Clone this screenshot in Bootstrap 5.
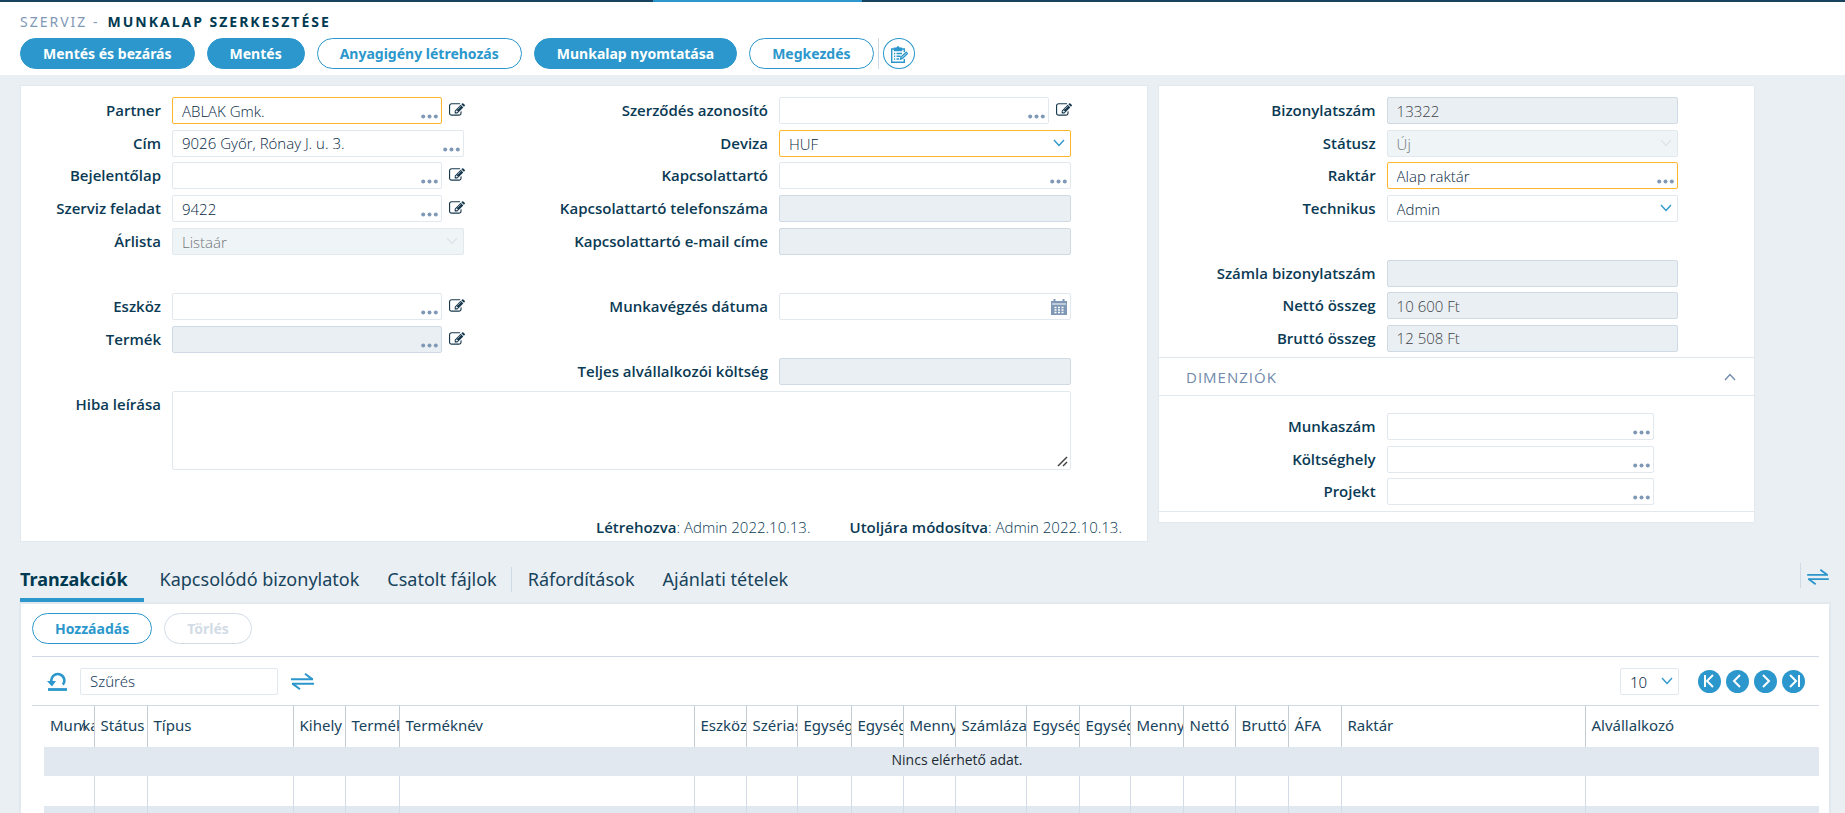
<!DOCTYPE html>
<html lang="hu">
<head>
<meta charset="utf-8">
<meta name="viewport" content="width=device-width, initial-scale=1">
<title>Munkalap szerkesztése</title>
<link href="https://cdn.jsdelivr.net/npm/bootstrap@5.3.0/dist/css/bootstrap.min.css" rel="stylesheet">
<style>
:root{--ink:#0b3a54;--blue:#2b97cc;--bg:#eaeff3;--line:#e1e8ee;--soft:#7f98b6;--warn:#fdb52a}
body{background:var(--bg);color:var(--ink);font:15px/20px "Open Sans","Noto Sans",sans-serif}
.ui-font{font-family:"Noto Sans","Open Sans",sans-serif}
.topline{height:2px;background:linear-gradient(90deg,#17435c 35.4%,var(--blue) 35.4% 46.7%,#17435c 46.7%)}
.head{height:73px;padding:10px 20px 0}
.crumbs{font-size:14px;letter-spacing:2px;color:var(--soft);gap:8px;height:20px;margin-bottom:6px}
.crumbs h1{font-size:14px;line-height:20px;font-weight:700;color:#003a51;margin:0}
.btn-row{display:flex;gap:12px}
.pill{height:31px;padding:0 22px;border:1px solid var(--blue);border-radius:16px;background:#fff;color:var(--blue);font:700 14px/20px "Noto Sans",sans-serif;white-space:nowrap}
.pill.full{background:var(--blue);color:#fff}
.pill:disabled{border-color:#d3dce6;color:#d3dce6}
.round-btn{width:32px;height:31px;border:1px solid var(--blue);border-radius:50%;background:#fff;color:var(--blue);padding:0}
.rule-v{width:1px;background:#cfdae4}
.panels{display:grid;grid-template-columns:1128fr 597fr;gap:10px;padding:10px 90px 0 20px;align-items:start}
.panel{background:#fff;border:1px solid var(--line)}
.fields{display:grid;grid-auto-rows:1fr}
.fields.main{grid-template-columns:151fr 292fr 315fr 292fr 76fr;grid-template-rows:repeat(9,1fr) auto;min-height:373px;margin-top:11px}
.fields.side{grid-template-columns:228fr 292fr 76fr;grid-template-rows:repeat(8,1fr);min-height:260px;margin-top:11px}
.fields.dims{grid-template-columns:228fr 268fr 100fr;grid-template-rows:repeat(3,1fr);min-height:98px}
.fields label{grid-column:1;text-align:right;padding-right:11px;font-weight:600;line-height:27px;white-space:nowrap}
.fields .fld{grid-column:2}
.fields label.c2{grid-column:3}
.fields .fld.c2{grid-column:4}
.fld{display:flex;position:relative;height:27px;min-width:0}
.box{flex:1;min-width:0;width:100%;height:27px;border:1px solid var(--line);border-radius:2px;background:#fff;color:#06283f;padding:0 9px;font-size:15px;font-weight:300;line-height:20px;outline:0;appearance:none}
.box:read-only:not(select){border-color:#cfdae4;background:var(--bg);color:#3d4347}
select.box{padding-top:2px}
select.box:disabled{background:#eff4f7;color:#707578;opacity:1}
.box.need,.box.need:read-only{border-color:var(--warn)}
.holder{position:relative;flex:1;display:flex;min-width:0}
.dots,.mark-r{position:absolute;right:4px;bottom:5px;border:0;background:none;padding:0;line-height:0;color:var(--soft)}
.mark-r{right:6px;top:0;bottom:0;display:flex;align-items:center;color:var(--blue);pointer-events:none}
.mark-r.off{color:#dde4ea}
.mark-r.cal{color:var(--soft);right:4px}
.edit{width:22px;border:0;background:none;padding:0 0 1px 7px;line-height:0;color:#17384d}
.fields .area{grid-column:2/5;height:auto}
textarea.box{height:79px;resize:none}
.grip{position:absolute;right:3px;bottom:3px}
.meta{padding:47px 25px 4px;gap:39px;line-height:20px;font-weight:300}
.meta b{font-weight:600}
.dim-head{border:solid var(--line);border-width:1px 0;height:39px;padding:0 18px 0 27px;margin-bottom:17px;background:#fff;color:#6f8aab;font-size:15px;font-weight:400;letter-spacing:1px}
.dim-foot{border-top:1px solid var(--line);height:11px}
.tabbar{margin:19px 16px 0 20px;height:41px;font-size:18px}
.tabbar a{color:#17435c;text-decoration:none;padding:6px 0 0;line-height:24px;margin-right:28px;white-space:nowrap}
.tabbar a.on{font-weight:700;color:#003a51;border-bottom:4px solid var(--blue);padding-right:16px;margin-right:16px}
.tabbar .rule-v{height:25px;margin:6px 16px 0 -14px}
.tabbar .rule-end{margin:2px 6px 0 auto}
.lower{margin:0 14px 0 19px;border:2px solid var(--line);background:#fff;padding:9px 10px 0 11px;min-height:240px}
.tools{border:solid #cfdae4;border-width:1px 0;height:50px;margin-top:12px;padding:0 14px 0 15px}
.icon-btn{border:0;background:none;padding:0;line-height:0;color:var(--blue)}
.search{flex:none;width:198px;margin:0 13px}
.search::placeholder{color:#17405f;opacity:1}
.page-size{width:59px;margin-right:19px}
.pagers{gap:5px}
.pager{width:23px;height:23px;border:0;border-radius:50%;background:var(--blue);color:#fff;padding:0;line-height:0}
.clip{overflow:hidden;margin-left:12px}
.clip table{table-layout:fixed;width:calc(100% + 50px);border-collapse:collapse}
.clip th{height:41px;font-weight:400;padding:0 0 3px 6px;border-right:1px solid #c3ccd2;overflow:hidden;white-space:nowrap;color:#17435c;position:relative}
.clip td{height:30px;padding:0;border-right:1px solid #d3dce6}
.clip th:last-child,.clip td:last-child{border-right:0}
.clip tbody tr:nth-child(odd){background:#e1e8ef}
.clip td.none{height:29px;text-align:center;color:#1c2a33;padding-bottom:3px;font-size:14px}
.caret{position:absolute;left:36px;top:15px}
col{width:52px}
col.w50{width:50px}col.w51{width:51px}col.w53{width:53px}col.w54{width:54px}col.w71{width:71px}col.w146{width:146px}col.w285{width:285px}col.w244{width:244px}col.w295{width:295px}
</style>
</head>
<body class="vh-100 overflow-hidden">
<svg width="0" height="0" class="d-none">
<symbol id="i-dots" viewBox="0 0 17 5"><g fill="currentColor"><circle cx="2.200" cy="2.500" r="2"/><circle cx="8.500" cy="2.500" r="2"/><circle cx="14.800" cy="2.500" r="2"/></g></symbol>
<symbol id="i-edit" viewBox="0 0 1792 1792"><path fill="currentColor" d="M888 1184l116-116-152-152-116 116v56h96v96h56zm440-720q-16-16-33 1l-350 350q-17 17-1 33t33-1l350-350q17-17 1-33zm80 594v190q0 119-84.500 203.500t-203.500 84.500h-832q-119 0-203.500-84.500t-84.500-203.500v-832q0-119 84.500-203.500t203.500-84.500h832q63 0 117 25 15 7 18 23 3 17-9 29l-49 49q-14 14-32 8-23-6-45-6h-832q-66 0-113 47t-47 113v832q0 66 47 113t113 47h832q66 0 113-47t47-113v-126q0-13 9-22l64-64q15-15 35-7t20 29zm-96-738l288 288-672 672h-288v-288zm444 132l-92 92-288-288 92-92q28-28 68-28t68 28l152 152q28 28 28 68t-28 68z"/></symbol>
<symbol id="i-down" viewBox="0 0 12 8"><path d="M1 1l5 5.500L11 1" fill="none" stroke="currentColor" stroke-width="1.300"/></symbol>
<symbol id="i-swap" viewBox="0 0 23 17"><path d="M0 6.200h22M23 10.800H1" stroke="currentColor" stroke-width="2"/><path d="M14 .8l7.500 5.600M9 16.200L1.500 10.600" stroke="currentColor" stroke-width="2" fill="none"/></symbol>
</svg>
<div class="topline"></div>
<header class="head bg-white ui-font">
<div class="crumbs d-flex"><span>SZERVIZ -</span><h1>MUNKALAP SZERKESZTÉSE</h1></div>
<div class="d-flex">
<div class="btn-row"><button class="pill full">Mentés és bezárás</button><button class="pill full">Mentés</button><button class="pill">Anyagigény létrehozás</button><button class="pill full">Munkalap nyomtatása</button><button class="pill">Megkezdés</button></div>
<div class="d-flex gap-1 ms-1"><span class="rule-v"></span><button class="round-btn" aria-label="Feladat"><svg width="18" height="18" viewBox="0 0 18 18" fill="none" stroke="currentColor" stroke-width="1.400"><path d="M5 3H1.700v13.300h12.600V13M11 3h3.300v3"/><path d="M4.500 4.500V2.300h2L8 .8l1.500 1.500h2v2.200z" fill="currentColor"/><path d="M4 7.500h1.200M6.500 7.500H12M4 10.200h1.200M6.500 10.200h4M4 13h1.200M6.500 13H9M10.500 13.200l.6-2.200 5-4.800 1.300 1.400-5 4.900z"/></svg></button></div>
</div>
</header>

<main>
<div class="panels">
<section class="panel">
<div class="fields main" id="mainForm"></div>
<div class="meta d-flex justify-content-end"><span><b>Létrehozva</b>: Admin 2022.10.13.</span><span><b>Utoljára módosítva</b>: Admin 2022.10.13.</span></div>
</section>
<section class="panel">
<div class="fields side" id="sideForm"></div>
<button class="dim-head w-100 d-flex align-items-center justify-content-between"><span>DIMENZIÓK</span><svg width="12" height="8" viewBox="0 0 12 8"><path d="M1 7l5-5.500L11 7" fill="none" stroke="currentColor" stroke-width="1.300"/></svg></button>
<div class="fields dims" id="dimForm"></div>
<div class="dim-foot"></div>
</section>
</div>

<nav class="tabbar d-flex ui-font">
<a class="on" href="#t1">Tranzakciók</a><a href="#t2">Kapcsolódó bizonylatok</a><a href="#t3">Csatolt fájlok</a><span class="rule-v"></span><a href="#t4">Ráfordítások</a><a href="#t5">Ajánlati tételek</a>
<span class="rule-v rule-end"></span><button class="icon-btn align-self-start mt-2" aria-label="Csere"><svg width="22" height="16"><use href="#i-swap"/></svg></button>
</nav>
<section class="lower">
<div class="btn-row"><button class="pill">Hozzáadás</button><button class="pill" disabled>Törlés</button></div>
<div class="tools d-flex align-items-center ui-font">
<button class="icon-btn" aria-label="Frissítés"><svg width="20" height="19" viewBox="0 0 20 19"><path d="M4.500 10A6.500 6.500 0 1 1 15.800 12.700" fill="none" stroke="currentColor" stroke-width="2.600"/><path d="M0 9h9L5 14.500z" fill="currentColor"/><path d="M1 17.500h19" stroke="currentColor" stroke-width="2.800"/></svg></button>
<input class="box search" aria-label="Szűrés" placeholder="Szűrés">
<button class="icon-btn" aria-label="Szűrők"><svg width="23" height="17"><use href="#i-swap"/></svg></button>
<div class="fld page-size ms-auto"><select class="box" aria-label="Sorok száma"><option>10</option></select><span class="mark-r"><svg width="12" height="8"><use href="#i-down"/></svg></span></div>
<div class="pagers d-flex">
<button class="pager" aria-label="Első"><svg width="23" height="23" fill="none" stroke="#fff" stroke-width="2"><path d="M7 5v12M15 5l-6 6 6 6"/></svg></button>
<button class="pager" aria-label="Előző"><svg width="23" height="23" fill="none" stroke="#fff" stroke-width="2"><path d="M14 5l-6 6 6 6"/></svg></button>
<button class="pager" aria-label="Következő"><svg width="23" height="23" fill="none" stroke="#fff" stroke-width="2"><path d="M9 5l6 6-6 6"/></svg></button>
<button class="pager" aria-label="Utolsó"><svg width="23" height="23" fill="none" stroke="#fff" stroke-width="2"><path d="M8 5l6 6-6 6M17 5v12"/></svg></button>
</div>
</div>
<div class="clip">
<table>
<colgroup><col class="w50"><col class="w53"><col class="w146"><col><col class="w54"><col class="w295"><col><col class="w51"><col class="w54"><col><col><col class="w71"><col class="w53"><col class="w51"><col class="w53"><col><col class="w53"><col class="w53"><col class="w244"><col class="w285"></colgroup>
<thead class="ui-font"><tr><th>Munka<svg class="caret" width="7" height="10" viewBox="0 0 7 10"><path d="M1 9l2.500-7L6 9" fill="none" stroke="#17435c"/></svg></th><th>Státus</th><th>Típus</th><th>Kihely</th><th>Termék</th><th>Terméknév</th><th>Eszköz</th><th>Szérias</th><th>Egység</th><th>Egység</th><th>Menny</th><th>Számláza</th><th>Egység</th><th>Egység</th><th>Menny</th><th>Nettó</th><th>Bruttó</th><th>ÁFA</th><th>Raktár</th><th>Alvállalkozó</th></tr></thead>
<tbody id="rows"><tr><td class="none" colspan="20">Nincs elérhető adat.</td></tr></tbody>
</table>
</div>
</section>
</main>
<script>
// [label, row, type, value, flags]; flags: e = edit button, n = required, d = read-only, 2 = second column
const dots='<button class="dots" aria-label="Keresés"><svg width="17" height="5"><use href="#i-dots"/></svg></button>';
const edit='<button class="edit" aria-label="Szerkesztés"><svg width="16" height="16"><use href="#i-edit"/></svg></button>';
function build(id,list){
  document.getElementById(id).innerHTML=list.map(([label,row,type,value,flags],i)=>{
    const key=id+i,has=f=>flags.includes(f),c=has('2')?' c2':'',need=has('n')?' need':'';
    let body;
    if(type==='select') body=`<select id="${key}" class="box${need}"${has('d')?' disabled':''}><option>${value}</option></select><span class="mark-r${has('d')?' off':''}"><svg width="12" height="8"><use href="#i-down"/></svg></span>`;
    else body=`<input id="${key}" class="box${need}" value="${value}"${has('d')?' readonly':''}>`+(type==='pick'?dots:'')+(type==='date'?'<span class="mark-r cal"><svg width="16" height="16" viewBox="0 0 16 16"><path d="M0 2h2.500V0h2v2h7V0h2v2H16v14H0z" fill="currentColor"/><path d="M1 5h14" stroke="#fff"/><path d="M3.500 8.500h9M3.500 11h9M3.500 13.500h9" stroke="#fff" stroke-width="1.600" stroke-dasharray="2 1.500"/></svg></span>':'');
    return `<label class="${c}" for="${key}" style="grid-row:${row}">${label}</label><div class="fld${c}" style="grid-row:${row}"><div class="holder">${body}</div>${has('e')?edit:''}</div>`;
  }).join('');
}
build('mainForm',[
['Partner',1,'pick','ABLAK Gmk.','en'],['Cím',2,'pick','9026 Győr, Rónay J. u. 3.',''],['Bejelentőlap',3,'pick','','e'],['Szerviz feladat',4,'pick','9422','e'],['Árlista',5,'select','Listaár','d'],['Eszköz',7,'pick','','e'],['Termék',8,'pick','','ed'],
['Szerződés azonosító',1,'pick','','2e'],['Deviza',2,'select','HUF','2n'],['Kapcsolattartó',3,'pick','','2'],['Kapcsolattartó telefonszáma',4,'text','','2d'],['Kapcsolattartó e-mail címe',5,'text','','2d'],['Munkavégzés dátuma',7,'date','','2'],['Teljes alvállalkozói költség',9,'text','','2d']]);
document.getElementById('mainForm').insertAdjacentHTML('beforeend','<label for="desc" style="grid-row:10">Hiba leírása</label><div class="fld area" style="grid-row:10"><textarea id="desc" class="box"></textarea><svg class="grip" width="11" height="11"><path d="M1 10L10 1M6 10l4-4" stroke="#444" stroke-width="1.500"/></svg></div>');
build('sideForm',[['Bizonylatszám',1,'text','13322','d'],['Státusz',2,'select','Új','d'],['Raktár',3,'pick','Alap raktár','n'],['Technikus',4,'select','Admin',''],['Számla bizonylatszám',6,'text','','d'],['Nettó összeg',7,'text','10 600 Ft','d'],['Bruttó összeg',8,'text','12 508 Ft','d']]);
build('dimForm',[['Munkaszám',1,'pick','',''],['Költséghely',2,'pick','',''],['Projekt',3,'pick','','']]);
document.getElementById('rows').insertAdjacentHTML('beforeend',('<tr>'+'<td></td>'.repeat(20)+'</tr>').repeat(2));
</script>
<script src="https://cdn.jsdelivr.net/npm/bootstrap@5.3.0/dist/js/bootstrap.bundle.min.js"></script>
</body>
</html>
